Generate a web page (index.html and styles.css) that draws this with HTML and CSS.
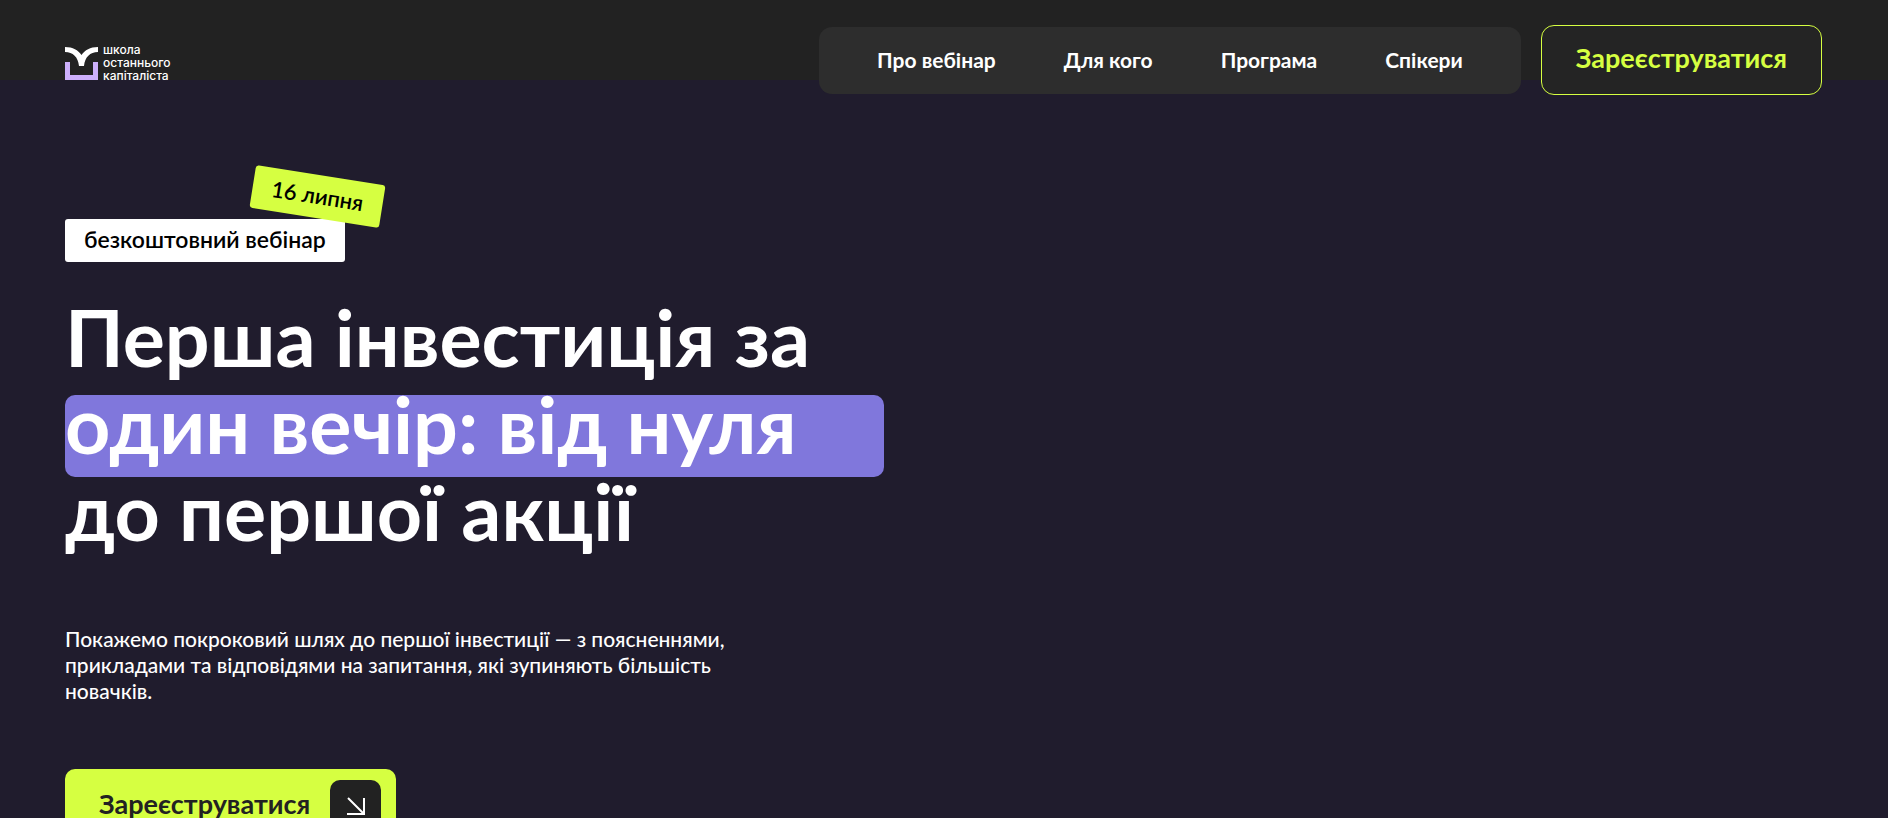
FILE: index.html
```html
<!DOCTYPE html>
<html lang="uk">
<head>
<meta charset="utf-8">
<meta name="viewport" content="width=device-width, initial-scale=1">
<title>Перша інвестиція за один вечір</title>
<link rel="stylesheet" href="styles.css">
</head>
<body>
<header class="header">
  <a class="logo" href="#top">
    <svg class="logo-mark" viewBox="0 0 33 33" aria-hidden="true">
      <path d="M2.500 15V30.500H30.500V15" fill="none" stroke="#cdb0fb" stroke-width="5"/>
      <path d="M0 0C8 0 13 3 16.500 8C20 3 25 0 33 0V5C25 5 20 10 19 19H14C13 10 8 5 0 5Z" fill="#fff"/>
    </svg>
    <span class="logo-text">школа<br>останнього<br>капіталіста</span>
  </a>
  <nav class="nav">
    <a href="#about">Про вебінар</a>
    <a href="#audience">Для кого</a>
    <a href="#program">Програма</a>
    <a href="#speakers">Спікери</a>
  </nav>
  <a class="register" href="#form">Зареєструватися</a>
</header>
<main class="hero" id="top">
  <div class="tags">
    <span class="tag">безкоштовний вебінар</span>
    <span class="tag tag-date">16 липня</span>
  </div>
  <h1 class="title">Перша інвестиція за <span class="mark">один вечір: від нуля</span> до першої акції</h1>
  <p class="lead">Покажемо покроковий шлях до першої інвестиції — з поясненнями, прикладами та відповідями на запитання, які зупиняють більшість новачків.</p>
  <a class="cta" href="#form">
    <span class="cta-label">Зареєструватися</span>
    <span class="cta-icon"><svg viewBox="0 0 20 20" aria-hidden="true"><path d="M2 2L17 17M18 2V18H1" fill="none" stroke="#fff" stroke-width="2"/></svg></span>
  </a>
</main>
</body>
</html>
```
FILE: styles.css
```css
* { box-sizing: border-box; }
body {
  margin: 0;
  background: #201c2d;
  color: #fff;
  font-family: Lato, "Open Sans", sans-serif;
}
a { color: inherit; text-decoration: none; }
.header {
  display: flex;
  align-items: center;
  height: 80px;
  padding: 40px 66px 0 65px;
  background: #222;
}
.logo {
  display: flex;
  align-items: center;
  gap: 5px;
  margin-right: auto;
  padding-top: 6px;
}
.logo-mark { width: 33px; height: 33px; }
.logo-text {
  padding-bottom: 1px;
  font: 500 12px/13px Inter, sans-serif;
}
.nav {
  display: flex;
  gap: 68px;
  padding: 19px 58px 21px;
  border-radius: 13px;
  background: #2d2d2d;
  font-size: 21px;
  font-weight: 700;
  line-height: 27px;
}
.register {
  margin-left: 20px;
  padding: 16px 34px 20px;
  border: 1px solid #d6ff41;
  border-radius: 13px;
  background: #242424;
  color: #d6ff41;
  font-size: 27px;
  font-weight: 700;
  line-height: 32px;
}
.hero { padding: 139px 65px 0; }
.tags { position: relative; display: flex; width: 281px; }
.tag {
  padding: 5px 19px 7px;
  border-radius: 3px;
  background: #fff;
  color: #000;
  font-size: 23px;
  font-weight: 600;
  line-height: 31px;
  white-space: nowrap;
}
.tag-date {
  position: absolute;
  left: 187px;
  top: -44px;
  background: #d6ff41;
  font-size: 22px;
  transform: rotate(9deg);
}
.title {
  max-width: 819px;
  margin: 42px 0 0;
  font-size: 79px;
  font-weight: 700;
  line-height: 66px;
}
.mark {
  display: block;
  margin: 25px 0 1px;
  padding-bottom: 24px;
  border-radius: 10px;
  background: #8077dc;
  line-height: 58px;
}
.lead {
  max-width: 690px;
  margin: 82px 0 0;
  font-size: 21px;
  font-weight: 500;
  line-height: 26px;
}
.cta {
  display: inline-flex;
  align-items: center;
  gap: 20px;
  margin-top: 65px;
  padding: 11px 15px 11px 34px;
  border-radius: 10px;
  background: #d6ff41;
  color: #222;
  font-size: 27px;
  font-weight: 700;
  line-height: 32px;
}
.cta-label { padding-bottom: 4px; }
.cta-icon {
  display: grid;
  place-items: center;
  width: 51px;
  height: 51px;
  border-radius: 10px;
  background: #222;
}
.cta-icon svg { width: 20px; height: 20px; }
```
